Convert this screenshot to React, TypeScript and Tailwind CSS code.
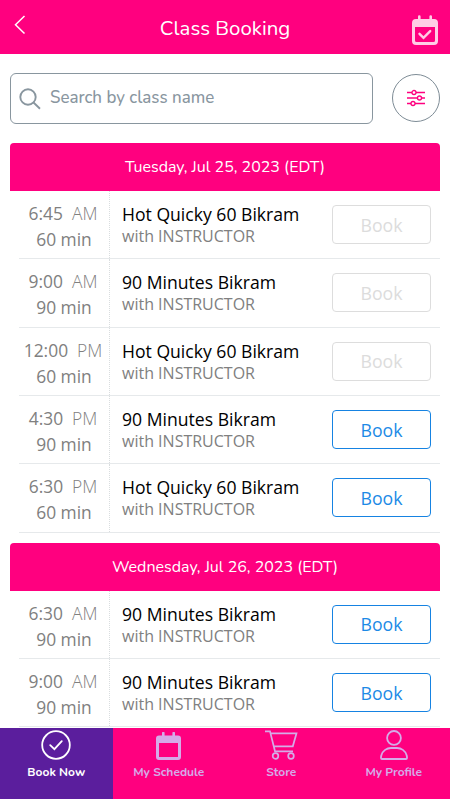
interface ClassItem {
  time: string;
  period: string;
  duration: string;
  title: string;
  open: boolean;
}

interface Day {
  label: string;
  classes: ClassItem[];
}

const days: Day[] = [
  {
    label: "Tuesday, Jul 25, 2023 (EDT)",
    classes: [
      { time: "6:45", period: "AM", duration: "60 min", title: "Hot Quicky 60 Bikram", open: false },
      { time: "9:00", period: "AM", duration: "90 min", title: "90 Minutes Bikram", open: false },
      { time: "12:00", period: "PM", duration: "60 min", title: "Hot Quicky 60 Bikram", open: false },
      { time: "4:30", period: "PM", duration: "90 min", title: "90 Minutes Bikram", open: true },
      { time: "6:30", period: "PM", duration: "60 min", title: "Hot Quicky 60 Bikram", open: true },
    ],
  },
  {
    label: "Wednesday, Jul 26, 2023 (EDT)",
    classes: [
      { time: "6:30", period: "AM", duration: "90 min", title: "90 Minutes Bikram", open: true },
      { time: "9:00", period: "AM", duration: "90 min", title: "90 Minutes Bikram", open: true },
    ],
  },
];

function Header() {
  return (
    <header className="flex h-[54px] shrink-0 items-start justify-between bg-[#ff007f] text-white">
      <button className="w-[60px] pt-[15px] pl-[14px]" aria-label="Back">
        <svg width="12" height="20" viewBox="0 0 12 20" fill="none" stroke="currentColor" strokeWidth="1.5">
          <path d="M10.5 1 1.5 9.7l9 8.8" />
        </svg>
      </button>
      <h1 className="pt-[14px] font-['Nunito','Open_Sans',sans-serif] text-[20.4px] leading-7 whitespace-nowrap">
        Class Booking
      </h1>
      <div className="flex w-[60px] justify-end pt-[15px] pr-[12px]">
        <svg width="26" height="30" viewBox="0 0 26 30" fill="none" className="text-[#ffcce5]">
          <path
            fill="currentColor"
            fillRule="evenodd"
            d="M4 4h2V1.5a1.3 1.3 0 0 1 2.6 0V4h8.8V1.5a1.3 1.3 0 0 1 2.6 0V4h2a4 4 0 0 1 4 4v18a4 4 0 0 1-4 4H4a4 4 0 0 1-4-4V8a4 4 0 0 1 4-4Zm-1 8v13.5A1.5 1.5 0 0 0 4.5 27h17a1.5 1.5 0 0 0 1.5-1.5V12Z"
          />
          <path d="m7.5 18.8 4 4 6.7-6.7" stroke="currentColor" strokeWidth="2.4" strokeLinecap="round" />
        </svg>
      </div>
    </header>
  );
}

function SearchBar() {
  return (
    <div className="flex h-[89px] shrink-0 items-start pt-[19px] pl-[10px]">
      <div className="flex h-[51px] w-[363px] items-center rounded-md border border-[#89969f] pl-[8px]">
        <svg width="22" height="22" viewBox="0 0 22 22" fill="none" stroke="#89969f" strokeWidth="1.9">
          <circle cx="9" cy="9" r="7.7" />
          <path d="m14.5 14.5 6.5 6.2" />
        </svg>
        <span className="-mt-[2px] ml-[9px] font-['Nunito','Open_Sans',sans-serif] text-[16.9px] font-medium text-[#89969f]">
          Search by class name
        </span>
      </div>
      <button
        className="mt-px ml-[19px] flex size-[48px] items-center justify-center rounded-full border border-[#7e8c96]"
        aria-label="Filters"
      >
        <svg width="18" height="18" viewBox="0 0 18 18" fill="none" stroke="#ff007f" strokeWidth="1.3">
          <path d="M0 3.5h5M9 3.5h9M0 9h10.5M14.5 9H18M0 14.5h4M8 14.5h10" />
          <circle cx="7" cy="3.5" r="2" />
          <circle cx="12.5" cy="9" r="2" />
          <circle cx="6" cy="14.5" r="2" />
        </svg>
      </button>
    </div>
  );
}

function ClassRow({ item }: { item: ClassItem }) {
  return (
    <div className="flex h-[68.4px]">
      <div className="ml-[9px] flex flex-1 border-b border-[#e6e9eb]">
        <div className="w-[91px] shrink-0 border-r border-dotted border-[#d9dddf] pt-[9px] text-center text-[#808080]">
          <div className="-mr-px -ml-[3px] text-[17.4px] leading-[26px] whitespace-nowrap">
            {item.time}
            <span className="ml-[9px] font-light">{item.period}</span>
          </div>
          <div className="text-[17.4px] leading-[27px]">{item.duration}</div>
        </div>
        <div className="flex-1 pt-[11px] pl-[12px] whitespace-nowrap">
          <div className="text-[17.6px] leading-[24px] text-black">{item.title}</div>
          <div className="text-[16px] leading-[21px] text-[#808080]">with INSTRUCTOR</div>
        </div>
        <button
          className={
            item.open
              ? "mt-[14px] mr-[9px] h-[39px] w-[99px] rounded border border-[#1683e2] pt-px text-[17.7px] text-[#1c8ae6]"
              : "mt-[14px] mr-[9px] h-[39px] w-[99px] rounded border border-[#dddddd] pt-px text-[17.7px] text-[#dcdcdc]"
          }
        >
          Book
        </button>
      </div>
    </div>
  );
}

function DaySection({ day }: { day: Day }) {
  return (
    <section className="mx-[10px] mb-[10px]">
      <h2 className="flex h-[47.8px] items-center justify-center rounded-t bg-[#ff007f] font-['Nunito','Open_Sans',sans-serif] text-[16px] text-white">
        {day.label}
      </h2>
      {day.classes.map((item) => (
        <ClassRow key={item.time + item.period} item={item} />
      ))}
    </section>
  );
}

function TabBar() {
  return (
    <nav className="mb-px grid h-[71px] shrink-0 grid-cols-4 bg-[#ff007f] font-['Nunito','Open_Sans',sans-serif] text-[12px] font-bold text-[#d5abe8]">
      <a className="flex flex-col items-center bg-[#5b1e9d] pt-[2px] text-white">
        <svg width="30" height="30" viewBox="0 0 30 30" fill="none" stroke="currentColor" strokeWidth="1.8">
          <circle cx="15" cy="15" r="13.8" />
          <path d="m9.2 15.2 4.2 4 7.4-8" strokeLinecap="round" />
        </svg>
        <span className="mt-[2px] leading-5">Book Now</span>
      </a>
      <a className="flex flex-col items-center pt-[4px]">
        <svg width="25" height="28" viewBox="0 0 25 28" fill="currentColor" fillRule="evenodd">
          <path d="M3 3.5h3V1a1.3 1.3 0 0 1 2.6 0v2.5h7.8V1A1.3 1.3 0 0 1 19 1v2.5h3a3 3 0 0 1 3 3V25a3 3 0 0 1-3 3H3a3 3 0 0 1-3-3V6.5a3 3 0 0 1 3-3ZM3 11v14h19V11Z" />
        </svg>
        <span className="mt-[2px] leading-5">My Schedule</span>
      </a>
      <a className="flex flex-col items-center pt-[2px]">
        <svg width="34" height="30" viewBox="0 0 34 30" fill="none" stroke="currentColor" strokeWidth="1.7">
          <path d="M1 1.3h5l5 20h18M7 3.3h25.5l-3.700 13H9.800" />
          <circle cx="11.5" cy="26" r="2.8" />
          <circle cx="27" cy="26" r="2.8" />
        </svg>
        <span className="mt-[2px] leading-5">Store</span>
      </a>
      <a className="flex flex-col items-center pt-[2px]">
        <svg width="28" height="30" viewBox="0 0 28 30" fill="none" stroke="currentColor" strokeWidth="1.8">
          <circle cx="14" cy="7.9" r="6.9" />
          <path d="M2 29C.5 29 1 27 1.3 25.5 2.5 20.5 7 18 11 18h6c4 0 8.500 2.500 9.700 7.500.3 1.500.8 3.500-.7 3.500Z" />
        </svg>
        <span className="mt-[2px] leading-5">My Profile</span>
      </a>
    </nav>
  );
}

export default function App() {
  return (
    <div className="flex h-[800px] w-[450px] flex-col overflow-hidden bg-white font-['Open_Sans',sans-serif]">
      <Header />
      <SearchBar />
      <main className="min-h-0 flex-1 overflow-hidden">
        {days.map((day) => (
          <DaySection key={day.label} day={day} />
        ))}
      </main>
      <TabBar />
    </div>
  );
}
